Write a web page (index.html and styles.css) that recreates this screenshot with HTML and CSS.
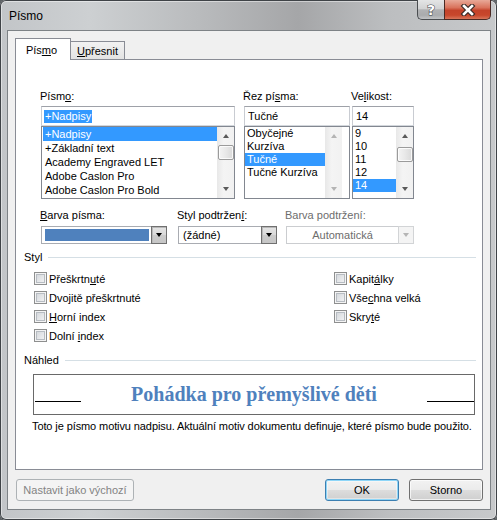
FILE: index.html
```html
<!DOCTYPE html>
<html lang="cs">
<head>
<meta charset="utf-8">
<title>Písmo</title>
<link rel="stylesheet" href="styles.css">
</head>
<body>
<div class="window">
  <div class="titlebar">
    <span class="title">Písmo</span>
    <div class="caption-buttons">
      <span class="cap-btn help">?</span>
      <span class="cap-btn close">
        <svg width="16" height="12" viewBox="0 0 16 12" aria-hidden="true">
          <path d="M4 2 L12 10 M12 2 L4 10" stroke="#3a2a26" stroke-width="4.8" stroke-linecap="square" fill="none"/>
          <path d="M4 2 L12 10 M12 2 L4 10" stroke="#ffffff" stroke-width="2.6" stroke-linecap="square" fill="none"/>
        </svg>
      </span>
    </div>
  </div>
  <div class="client">
    <div class="tabs">
      <div class="tab active">Pís<u>m</u>o</div>
      <div class="tab"><u>U</u>přesnit</div>
    </div>
    <div class="panel">
      <div class="font-row">
        <div class="col col-font">
          <div class="lbl">Písm<u>o</u>:</div>
          <div class="edit"><span class="sel-text">+Nadpisy</span></div>
          <div class="list">
            <ul class="items rows14">
              <li class="selected">+Nadpisy</li>
              <li>+Základní text</li>
              <li>Academy Engraved LET</li>
              <li>Adobe Caslon Pro</li>
              <li>Adobe Caslon Pro Bold</li>
            </ul>
            <div class="vscroll">
              <span class="arrow up"></span>
              <span class="thumb thumb-font"></span>
              <span class="arrow down"></span>
            </div>
          </div>
        </div>
        <div class="col col-style">
          <div class="lbl">Řez pí<u>s</u>ma:</div>
          <div class="edit"><span class="edit-text">Tučné</span></div>
          <div class="list">
            <ul class="items rows13 items-style">
              <li>Obyčejné</li>
              <li>Kurzíva</li>
              <li class="selected">Tučné</li>
              <li>Tučné Kurzíva</li>
            </ul>
            <div class="vscroll disabled">
              <span class="arrow up"></span>
              <span class="arrow down"></span>
            </div>
          </div>
        </div>
        <div class="col col-size">
          <div class="lbl">Ve<u>l</u>ikost:</div>
          <div class="edit"><span class="edit-text">14</span></div>
          <div class="list">
            <ul class="items rows13">
              <li>9</li>
              <li>10</li>
              <li>11</li>
              <li>12</li>
              <li class="selected">14</li>
            </ul>
            <div class="vscroll">
              <span class="arrow up"></span>
              <span class="thumb thumb-size"></span>
              <span class="arrow down"></span>
            </div>
          </div>
        </div>
      </div>

      <div class="combo-row">
        <div class="col col-color">
          <div class="lbl"><u>B</u>arva písma:</div>
          <div class="combo">
            <span class="swatch"></span>
            <span class="combo-btn pressed"><span class="tri"></span></span>
          </div>
        </div>
        <div class="col col-uline">
          <div class="lbl">Styl podtržen<u>í</u>:</div>
          <div class="combo">
            <span class="combo-text">(žádné)</span>
            <span class="combo-btn pressed"><span class="tri"></span></span>
          </div>
        </div>
        <div class="col col-ucolor">
          <div class="lbl disabled-text">Barva podtržení:</div>
          <div class="combo disabled">
            <span class="combo-text centered">Automatická</span>
            <span class="combo-btn"><span class="tri"></span></span>
          </div>
        </div>
      </div>

      <div class="group-head"><span>Styl</span><span class="rule"></span></div>
      <div class="checks">
        <div class="check-col left">
          <div class="check"><span class="box"></span><span>Přeškrtn<u>u</u>té</span></div>
          <div class="check"><span class="box"></span><span>Dvojitě přeškrtnuté</span></div>
          <div class="check"><span class="box"></span><span><u>H</u>orní index</span></div>
          <div class="check"><span class="box"></span><span>Dolní <u>i</u>ndex</span></div>
        </div>
        <div class="check-col right">
          <div class="check"><span class="box"></span><span>Kapit<u>á</u>lky</span></div>
          <div class="check"><span class="box"></span><span>Vše<u>c</u>hna velká</span></div>
          <div class="check"><span class="box"></span><span>Skry<u>t</u>é</span></div>
        </div>
      </div>

      <div class="group-head preview-head"><span>Náhled</span><span class="rule"></span></div>
      <div class="preview">
        <span class="base-line left-line"></span>
        <span class="preview-text">Pohádka pro přemyšlivé děti</span>
        <span class="base-line right-line"></span>
      </div>
      <div class="desc">Toto je písmo motivu nadpisu. Aktuální motiv dokumentu definuje, které písmo bude použito.</div>
    </div>
    <div class="buttons">
      <span class="btn btn-disabled btn-default">Nastavit jako výchozí</span>
      <span class="btn btn-ok">OK</span>
      <span class="btn btn-cancel">Storno</span>
    </div>
  </div>
</div>
</body>
</html>
```

FILE: styles.css
```css
* { box-sizing: border-box; }
html, body { margin: 0; padding: 0; }
body {
  width: 497px;
  height: 520px;
  overflow: hidden;
  background: #5e6366;
  font-family: "Liberation Sans", Arial, sans-serif;
  font-size: 11px;
  color: #000;
}
u { text-decoration: underline; text-underline-offset: 1px; }

.window {
  width: 497px;
  height: 520px;
  padding: 0 6px 10px 7px;
  display: flex;
  flex-direction: column;
  border-radius: 6px;
  background:
    linear-gradient(90deg, #c2c5c8 0%, #cdd0d2 18%, #b9bbbd 40%, #a5a6a8 60%, #bcbec0 78%, #c7c9cb 100%);
  box-shadow: inset 0 0 0 1px #3f4347, inset 0 0 0 2px rgba(255,255,255,0.45);
}

.titlebar {
  height: 30px;
  flex: 0 0 30px;
  display: flex;
  align-items: flex-start;
}
.title {
  margin-left: 2px;
  margin-top: 8px;
  line-height: 16px;
  font-size: 12px;
  color: #000;
}
.caption-buttons {
  margin-left: auto;
  display: flex;
  height: 20px;
}
.cap-btn {
  height: 20px;
  display: flex;
  align-items: center;
  justify-content: center;
}
.help {
  width: 27px;
  border: 1px solid #4a4d50;
  border-top: none;
  border-right: none;
  border-radius: 0 0 0 5px;
  background: linear-gradient(#e4e5e6 0%, #d2d3d4 45%, #b1b2b4 52%, #a9abad 80%, #c2c4c6 100%);
  color: #fff;
  font-family: "DejaVu Sans", sans-serif;
  font-weight: bold;
  font-size: 14px;
  line-height: 18px;
  -webkit-text-stroke: 1px #3c4044;
  paint-order: stroke fill;
}
.close {
  width: 47px;
  border: 1px solid #4a2a24;
  border-top: none;
  border-radius: 0 0 5px 0;
  background: linear-gradient(#e8a998 0%, #d9735c 40%, #c4432a 55%, #c8472c 80%, #d8765a 100%);
}

.client {
  flex: 1;
  background: #f0f0f0;
  border: 1px solid #7d8286;
  padding: 7px 7px 0 7px;
  display: flex;
  flex-direction: column;
}

.tabs {
  display: flex;
  align-items: flex-end;
  height: 22px;
  margin-bottom: -1px;
  position: relative;
  z-index: 1;
}
.tab {
  border: 1px solid #898c95;
  border-bottom: none;
  text-align: center;
}
.tab.active {
  width: 56px;
  height: 22px;
  background: #fff;
  line-height: 22px;
  padding-right: 3px;
}
.tab:not(.active) {
  width: 54px;
  height: 18px;
  margin-bottom: 1px;
  border-left: none;
  background: linear-gradient(#f2f2f2, #e3e3e3);
  line-height: 19px;
}

.panel {
  width: 468px;
  height: 411px;
  background: #fff;
  border: 1px solid #898c95;
  padding: 29px 6px 0 8px;
}

.font-row, .combo-row {
  display: flex;
  margin-left: 17px;
}
.lbl {
  height: 15px;
  line-height: 15px;
  margin-left: -1px;
  margin-bottom: 2px;
  white-space: nowrap;
}
.col-font { width: 194px; }
.col-style { width: 106px; margin-left: 9px; }
.col-size { width: 62px; margin-left: 2px; }

.edit {
  height: 20px;
  border: 1px solid #a3a6ad;
  border-color: #9ea1a8 #c9ccd2 #d3d7dc #c9ccd2;
  padding-left: 2px;
  line-height: 18px;
  display: flex;
  align-items: center;
}
.sel-text {
  background: #3399ff;
  color: #fff;
  line-height: 13px;
  padding: 0 1px;
}
.edit-text { padding-left: 1px; }

.list {
  height: 73px;
  border: 1px solid #828790;
  display: flex;
  background: #fff;
}
.items {
  list-style: none;
  margin: 0;
  padding: 0;
  flex: 1;
  min-width: 0;
}
.col-font .items { padding-left: 1px; }
.items li {
  padding-left: 2px;
  white-space: nowrap;
  overflow: hidden;
}
.rows14 li { height: 14px; line-height: 14px; }
.rows13 li { height: 13px; line-height: 13px; }
.items li.selected { background: #3399ff; color: #fff; }
.items-style { flex: 0 0 80px; }
.col-style .vscroll { margin-right: auto; }

.vscroll {
  width: 17px;
  flex: 0 0 17px;
  display: flex;
  flex-direction: column;
  align-items: center;
  background: linear-gradient(90deg, #e8e8e8, #f4f4f4 40%, #f1f1f1);
}
.arrow {
  width: 0;
  height: 0;
  border-left: 3.5px solid transparent;
  border-right: 3.5px solid transparent;
}
.arrow.up {
  border-bottom: 4px solid #5a5a5a;
  margin-top: 7px;
}
.arrow.down {
  border-top: 4px solid #5a5a5a;
  margin-top: auto;
  margin-bottom: 7px;
}
.vscroll.disabled .arrow.up { border-bottom-color: #b4b4b4; }
.vscroll.disabled .arrow.down { border-top-color: #b4b4b4; }
.thumb {
  width: 16px;
  height: 15px;
  border: 1px solid #9b9b9b;
  border-radius: 2px;
  background: linear-gradient(90deg, #f4f4f4, #e8e8e8 50%, #d9d9d9);
  box-shadow: inset 0 0 0 1px rgba(255,255,255,0.8);
}
.thumb-font { margin-top: 7px; }
.thumb-size { margin-top: 9px; }

.combo-row { margin-top: 9px; }
.combo-row .lbl { margin-bottom: 3px; }
.col-color { width: 126px; }
.col-uline { width: 99px; margin-left: 11px; }
.col-ucolor { width: 128px; margin-left: 9px; }

.combo {
  height: 18px;
  border: 1px solid #a9acb2;
  background: #fff;
  display: flex;
  align-items: center;
}
.swatch {
  width: 104px;
  height: 12px;
  margin-left: 3px;
  background: #4f81bd;
}
.combo-text {
  padding-left: 4px;
  line-height: 16px;
  white-space: nowrap;
}
.combo-text.centered {
  flex: 1;
  text-align: center;
  padding-left: 0;
  color: #6d6d6d;
}
.combo-btn {
  margin: -1px -1px -1px auto;
  width: 16px;
  height: 18px;
  border: 1px solid #707070;
  background: linear-gradient(#f2f2f2, #e6e6e6 50%, #d6d6d6 51%, #cfcfcf);
  display: flex;
  align-items: center;
  justify-content: center;
}
.combo-btn.pressed {
  background: linear-gradient(#e5e5e5, #d9d9d9 50%, #cbcbcb 51%, #c6c6c6);
  box-shadow: inset 1px 1px 0 #b8b8b8;
}
.tri {
  width: 0;
  height: 0;
  border-left: 3.5px solid transparent;
  border-right: 3.5px solid transparent;
  border-top: 4px solid #000;
}
.combo.disabled {
  border-color: #cbcdd0;
  background: #fff;
}
.combo.disabled .combo-btn {
  border-color: #d2d4d6;
  background: #f4f4f4;
  margin-left: 0;
}
.combo.disabled .tri { border-top-color: #b5b5b5; }
.disabled-text { color: #6d6d6d; }

.group-head {
  display: flex;
  align-items: center;
  height: 15px;
  line-height: 15px;
  margin-top: 6px;
}
.group-head .rule {
  flex: 1;
  height: 1px;
  background: #d5dfe5;
  margin-left: 6px;
}

.checks {
  display: flex;
  margin-top: 4px;
  height: 76px;
}
.check-col.left { width: 300px; margin-left: 10px; }
.check {
  height: 19px;
  display: flex;
  align-items: center;
  white-space: nowrap;
}
.box {
  width: 13px;
  height: 13px;
  border: 1px solid #8e8f8f;
  margin-right: 2px;
  background: linear-gradient(135deg, #cfd3d8, #f7f7f7);
  box-shadow: inset 0 0 0 1px #f4f4f4, inset 0 0 0 2px #b7bcc2;
  flex: 0 0 13px;
}

.preview-head { margin-top: 8px; }
.preview {
  margin: 6px 1px 0 9px;
  height: 41px;
  border: 1px solid #696969;
  display: flex;
  align-items: flex-start;
}
.base-line {
  height: 1px;
  background: #000;
  margin-top: 26px;
}
.left-line { width: 46px; margin-left: 1px; }
.right-line { width: 47px; }
.preview-text {
  flex: 1;
  text-align: center;
  font-family: "Liberation Serif", "Times New Roman", serif;
  font-weight: bold;
  font-size: 20px;
  line-height: 39px;
  color: #4f81bd;
  white-space: nowrap;
}
.desc {
  margin-top: 4px;
  margin-left: 8px;
  line-height: 15px;
  white-space: nowrap;
  letter-spacing: -0.1px;
}

.buttons {
  display: flex;
  margin-top: 9px;
}
.btn {
  height: 22px;
  border: 1px solid #707070;
  border-radius: 3px;
  background: linear-gradient(#f2f2f2 0%, #ebebeb 50%, #dddddd 51%, #cfcfcf 100%);
  box-shadow: inset 0 0 0 1px rgba(255,255,255,0.7);
  display: flex;
  align-items: center;
  justify-content: center;
  line-height: 20px;
}
.btn-default {
  width: 118px;
  margin-left: 1px;
}
.btn-disabled {
  border-color: #adb2b5;
  background: #f4f4f4;
  box-shadow: none;
  color: #838383;
}
.btn-ok {
  width: 74px;
  margin-left: auto;
  border-color: #3c7fb1;
  box-shadow: inset 0 0 0 1px #8ed6f8, inset 0 0 0 2px rgba(255,255,255,0.4);
}
.btn-cancel {
  width: 74px;
  margin-left: 10px;
}
```
